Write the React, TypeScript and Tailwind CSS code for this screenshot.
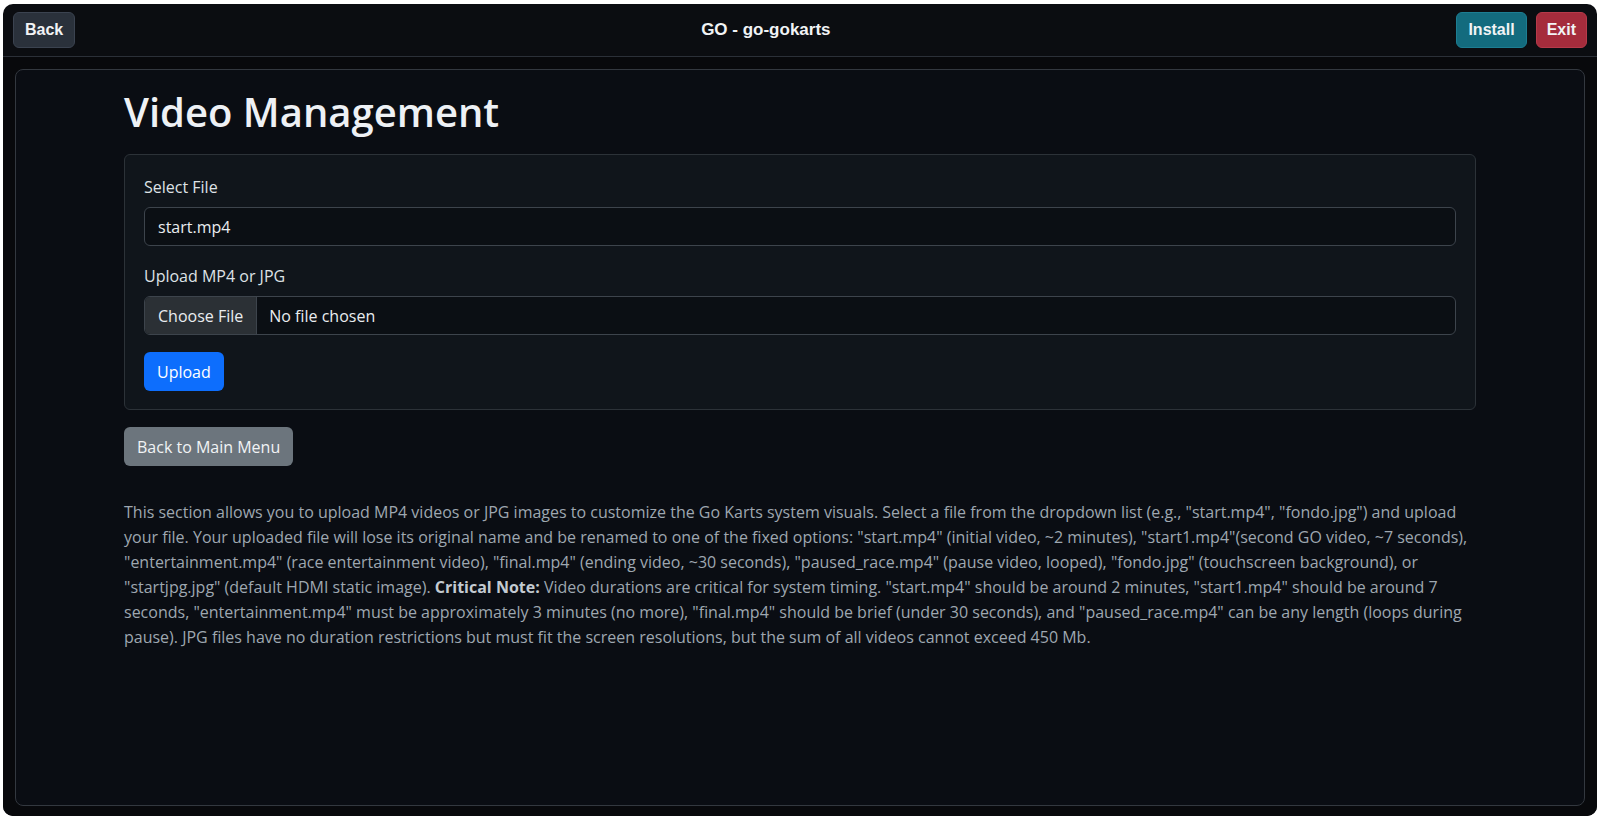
import React from 'react';

const sans = "font-['Open_Sans','Noto_Sans',sans-serif]";

function Header() {
  return (
    <div className="flex h-[53px] shrink-0 items-center justify-between border-b border-[#2b3038] px-[10px] font-['Liberation_Sans',Arial,sans-serif]">
      <button className="h-[36px] rounded-[6px] border border-[#3b4350] bg-[#2a313b] px-[11px] text-[16px] font-bold text-[#f1f3f5]">
        Back
      </button>
      <div className="text-[17px] font-bold text-[#f1f3f5]">GO - go-gokarts</div>
      <div className="flex gap-[9px]">
        <button className="h-[36px] rounded-[6px] border border-[#1d7d92] bg-[#136b7e] px-[11px] text-[16px] font-bold text-[#f1f3f5]">
          Install
        </button>
        <button className="h-[36px] rounded-[6px] border border-[#b63a4a] bg-[#a52c3c] px-[10px] text-[16px] font-bold text-[#f1f3f5]">
          Exit
        </button>
      </div>
    </div>
  );
}

function UploadForm() {
  return (
    <div className="rounded-[6px] border border-[#2c3238] bg-[#10151b] px-[19px] pt-[20px] pb-[18px]">
      <div className="mb-[8px] text-[16px] leading-[24px] text-[#dee2e6]">Select File</div>
      <div className="mb-[18px] flex h-[39px] items-center rounded-[6px] border border-[#3d444c] bg-[#0b0f14] px-[13px] text-[16px] text-[#e9ecef]">
        start.mp4
      </div>
      <div className="mb-[8px] text-[16px] leading-[24px] text-[#dee2e6]">Upload MP4 or JPG</div>
      <div className="mb-[17px] flex h-[39px] overflow-hidden rounded-[6px] border border-[#3d444c] bg-[#0b0f14] text-[16px] text-[#e9ecef]">
        <div className="flex items-center border-r border-[#3d444c] bg-[#2b3035] px-[13px]">Choose File</div>
        <div className="flex items-center px-[12px]">No file chosen</div>
      </div>
      <button className="h-[39px] rounded-[6px] bg-[#0d6efd] px-[13px] text-[16px] text-white">Upload</button>
    </div>
  );
}

export default function App() {
  return (
    <div className={`h-[818px] w-full bg-white pt-[4px] px-[3px] pb-[2px] ${sans}`}>
      <div className="flex h-full flex-col overflow-hidden rounded-[10px] bg-[#0b0d11]">
        <Header />
        <div className="flex flex-1 flex-col bg-[#08090c] px-[12px] pt-[12px] pb-[10px]">
          <div className="flex-1 rounded-[8px] border border-[#33383f] bg-[#0a0d13]">
            <div className="mx-auto w-[1352px] pt-[18px]">
              <h1 className="mb-[18px] text-[40px] leading-[48px] font-semibold text-[#eef1f5]">Video Management</h1>
              <UploadForm />
              <button className="mt-[17px] h-[39px] rounded-[6px] bg-[#6c757d] px-[13px] text-[16px] text-[#f1f3f5]">
                Back to Main Menu
              </button>
              <p className="mt-[34px] text-[16px] leading-[25px] text-[#9ea7b0]">
                This section allows you to upload MP4 videos or JPG images to customize the Go Karts system visuals. Select a file from the dropdown list (e.g., "start.mp4", "fondo.jpg") and upload
                <br />
                your file. Your uploaded file will lose its original name and be renamed to one of the fixed options: "start.mp4" (initial video, ~2 minutes), "start1.mp4"(second GO video, ~7 seconds),
                <br />
                "entertainment.mp4" (race entertainment video), "final.mp4" (ending video, ~30 seconds), "paused_race.mp4" (pause video, looped), "fondo.jpg" (touchscreen background), or
                <br />
                "startjpg.jpg" (default HDMI static image). <strong className="font-bold text-[#c3cad1]">Critical Note:</strong> Video durations are critical for system timing. "start.mp4" should be around 2 minutes, "start1.mp4" should be around 7
                <br />
                seconds, "entertainment.mp4" must be approximately 3 minutes (no more), "final.mp4" should be brief (under 30 seconds), and "paused_race.mp4" can be any length (loops during
                <br />
                pause). JPG files have no duration restrictions but must fit the screen resolutions, but the sum of all videos cannot exceed 450 Mb.
              </p>
            </div>
          </div>
        </div>
      </div>
    </div>
  );
}
